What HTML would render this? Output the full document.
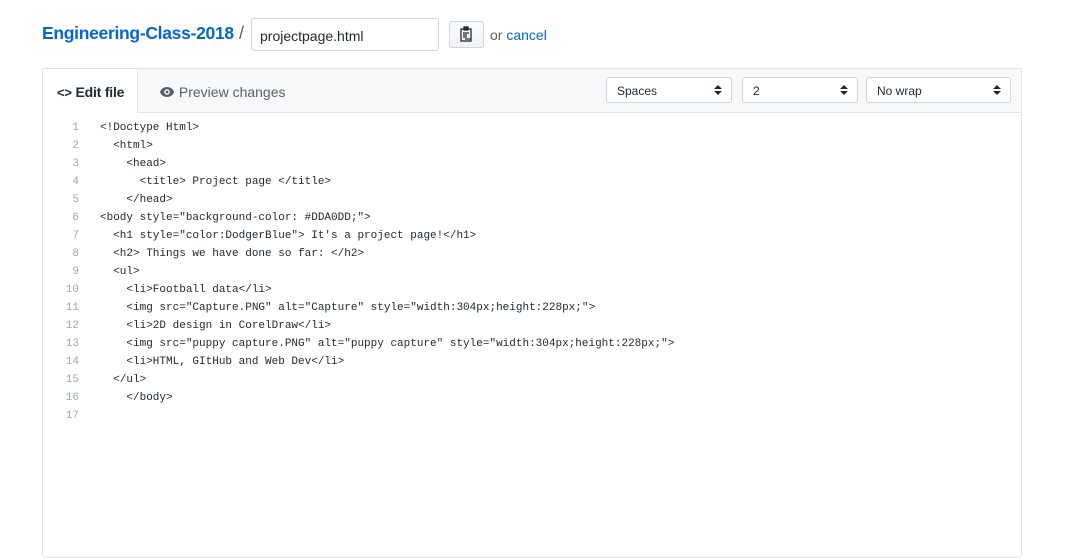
<!DOCTYPE html>
<html><head><style>
body{margin:0;background:#fff;font-family:"Liberation Sans",sans-serif;width:1067px;height:550px;overflow:hidden;position:relative}
.a{position:absolute}
.t{left:42px;top:23px;font-size:17.5px;font-weight:bold;color:#0366d6;letter-spacing:-0.3px}
.sl{left:239px;top:23px;font-size:18px;color:#586069}
.inp{left:251px;top:18px;width:188px;height:33px;border:1px solid #d1d5da;border-radius:3px;box-sizing:border-box;font-size:14px;color:#24292e;padding:9px 8px}
.btn{left:449px;top:21px;width:35px;height:27px;border:1px solid #d1d5da;border-radius:3px;box-sizing:border-box;background:linear-gradient(#fafbfc,#eff3f6)}
.oc{left:490px;top:27px;font-size:14px;color:#586069}
.oc span{color:#0366d6}
.box{left:42px;top:68px;width:980px;height:490px;border:1px solid #e1e4e8;border-radius:3px;box-sizing:border-box}
.hd{left:43px;top:69px;width:978px;height:43px;background:#f6f8fa;border-bottom:1px solid #e1e4e8}
.tab{left:43px;top:69px;width:95px;height:44px;background:#fff;border-right:1px solid #e1e4e8;box-sizing:border-box;font-size:14px;color:#24292e}
.sel{top:77px;height:26px;border:1px solid #d1d5da;border-radius:3px;box-sizing:border-box;background:#fff;font-size:12px;color:#24292e;padding:6px 10px}
.sel:after{content:"";position:absolute;right:9px;top:7px;border:4px solid transparent;border-bottom:4px solid #24292e;border-top:0}
.sel:before{content:"";position:absolute;right:9px;top:13px;border:4px solid transparent;border-top:4px solid #24292e;border-bottom:0}
.code{left:43px;top:119px;font-family:"Liberation Mono",monospace;font-size:11px;line-height:18px;color:#24292e;white-space:pre}
.ln{display:inline-block;width:36px;text-align:right;color:#a0a6ad;margin-right:21px}
</style></head><body>
<div class="a t">Engineering-Class-2018</div>
<div class="a sl">/</div>
<div class="a inp">projectpage.html</div>
<div class="a btn"><svg width="33" height="25" viewBox="0 0 33 25"><g fill="none" stroke="#24292e" stroke-width="1.3"><rect x="11" y="7" width="10" height="12"/><rect x="14" y="5" width="4" height="3" fill="#24292e"/><path d="M13 11h6M13 13h4M13 15h4M15 17h6"/></g></svg></div>
<div class="a oc">or <span>cancel</span></div>
<div class="a box"></div>
<div class="a hd"></div>
<div class="a tab"><div class="a" style="left:14px;top:15px;font-weight:bold;letter-spacing:-0.2px"><span style="font-size:13px">&lt;&gt;</span> Edit file</div></div>
<div class="a" style="left:159px;top:84px;font-size:14px;color:#586069"><svg width="16" height="12" viewBox="0 0 16 12" style="vertical-align:-1px"><path d="M8 1C4 1 1.5 4 1 6c.5 2 3 5 7 5s6.5-3 7-5c-.5-2-3-5-7-5z" fill="#586069"/><circle cx="8" cy="6" r="2.8" fill="#f6f8fa"/><circle cx="8" cy="6" r="1.4" fill="#586069"/></svg> Preview changes</div>
<div class="a sel" style="left:606px;width:126px">Spaces</div>
<div class="a sel" style="left:742px;width:116px">2</div>
<div class="a sel" style="left:866px;width:145px">No wrap</div>
<div class="a code"><span class="ln">1</span>&lt;!Doctype Html&gt;
<span class="ln">2</span>  &lt;html&gt;
<span class="ln">3</span>    &lt;head&gt;
<span class="ln">4</span>      &lt;title&gt; Project page &lt;/title&gt;
<span class="ln">5</span>    &lt;/head&gt;
<span class="ln">6</span>&lt;body style="background-color: #DDA0DD;"&gt;
<span class="ln">7</span>  &lt;h1 style="color:DodgerBlue"&gt; It's a project page!&lt;/h1&gt;
<span class="ln">8</span>  &lt;h2&gt; Things we have done so far: &lt;/h2&gt;
<span class="ln">9</span>  &lt;ul&gt;
<span class="ln">10</span>    &lt;li&gt;Football data&lt;/li&gt;
<span class="ln">11</span>    &lt;img src="Capture.PNG" alt="Capture" style="width:304px;height:228px;"&gt;
<span class="ln">12</span>    &lt;li&gt;2D design in CorelDraw&lt;/li&gt;
<span class="ln">13</span>    &lt;img src="puppy capture.PNG" alt="puppy capture" style="width:304px;height:228px;"&gt;
<span class="ln">14</span>    &lt;li&gt;HTML, GItHub and Web Dev&lt;/li&gt;
<span class="ln">15</span>  &lt;/ul&gt;
<span class="ln">16</span>    &lt;/body&gt;
<span class="ln">17</span></div>
</body></html>
